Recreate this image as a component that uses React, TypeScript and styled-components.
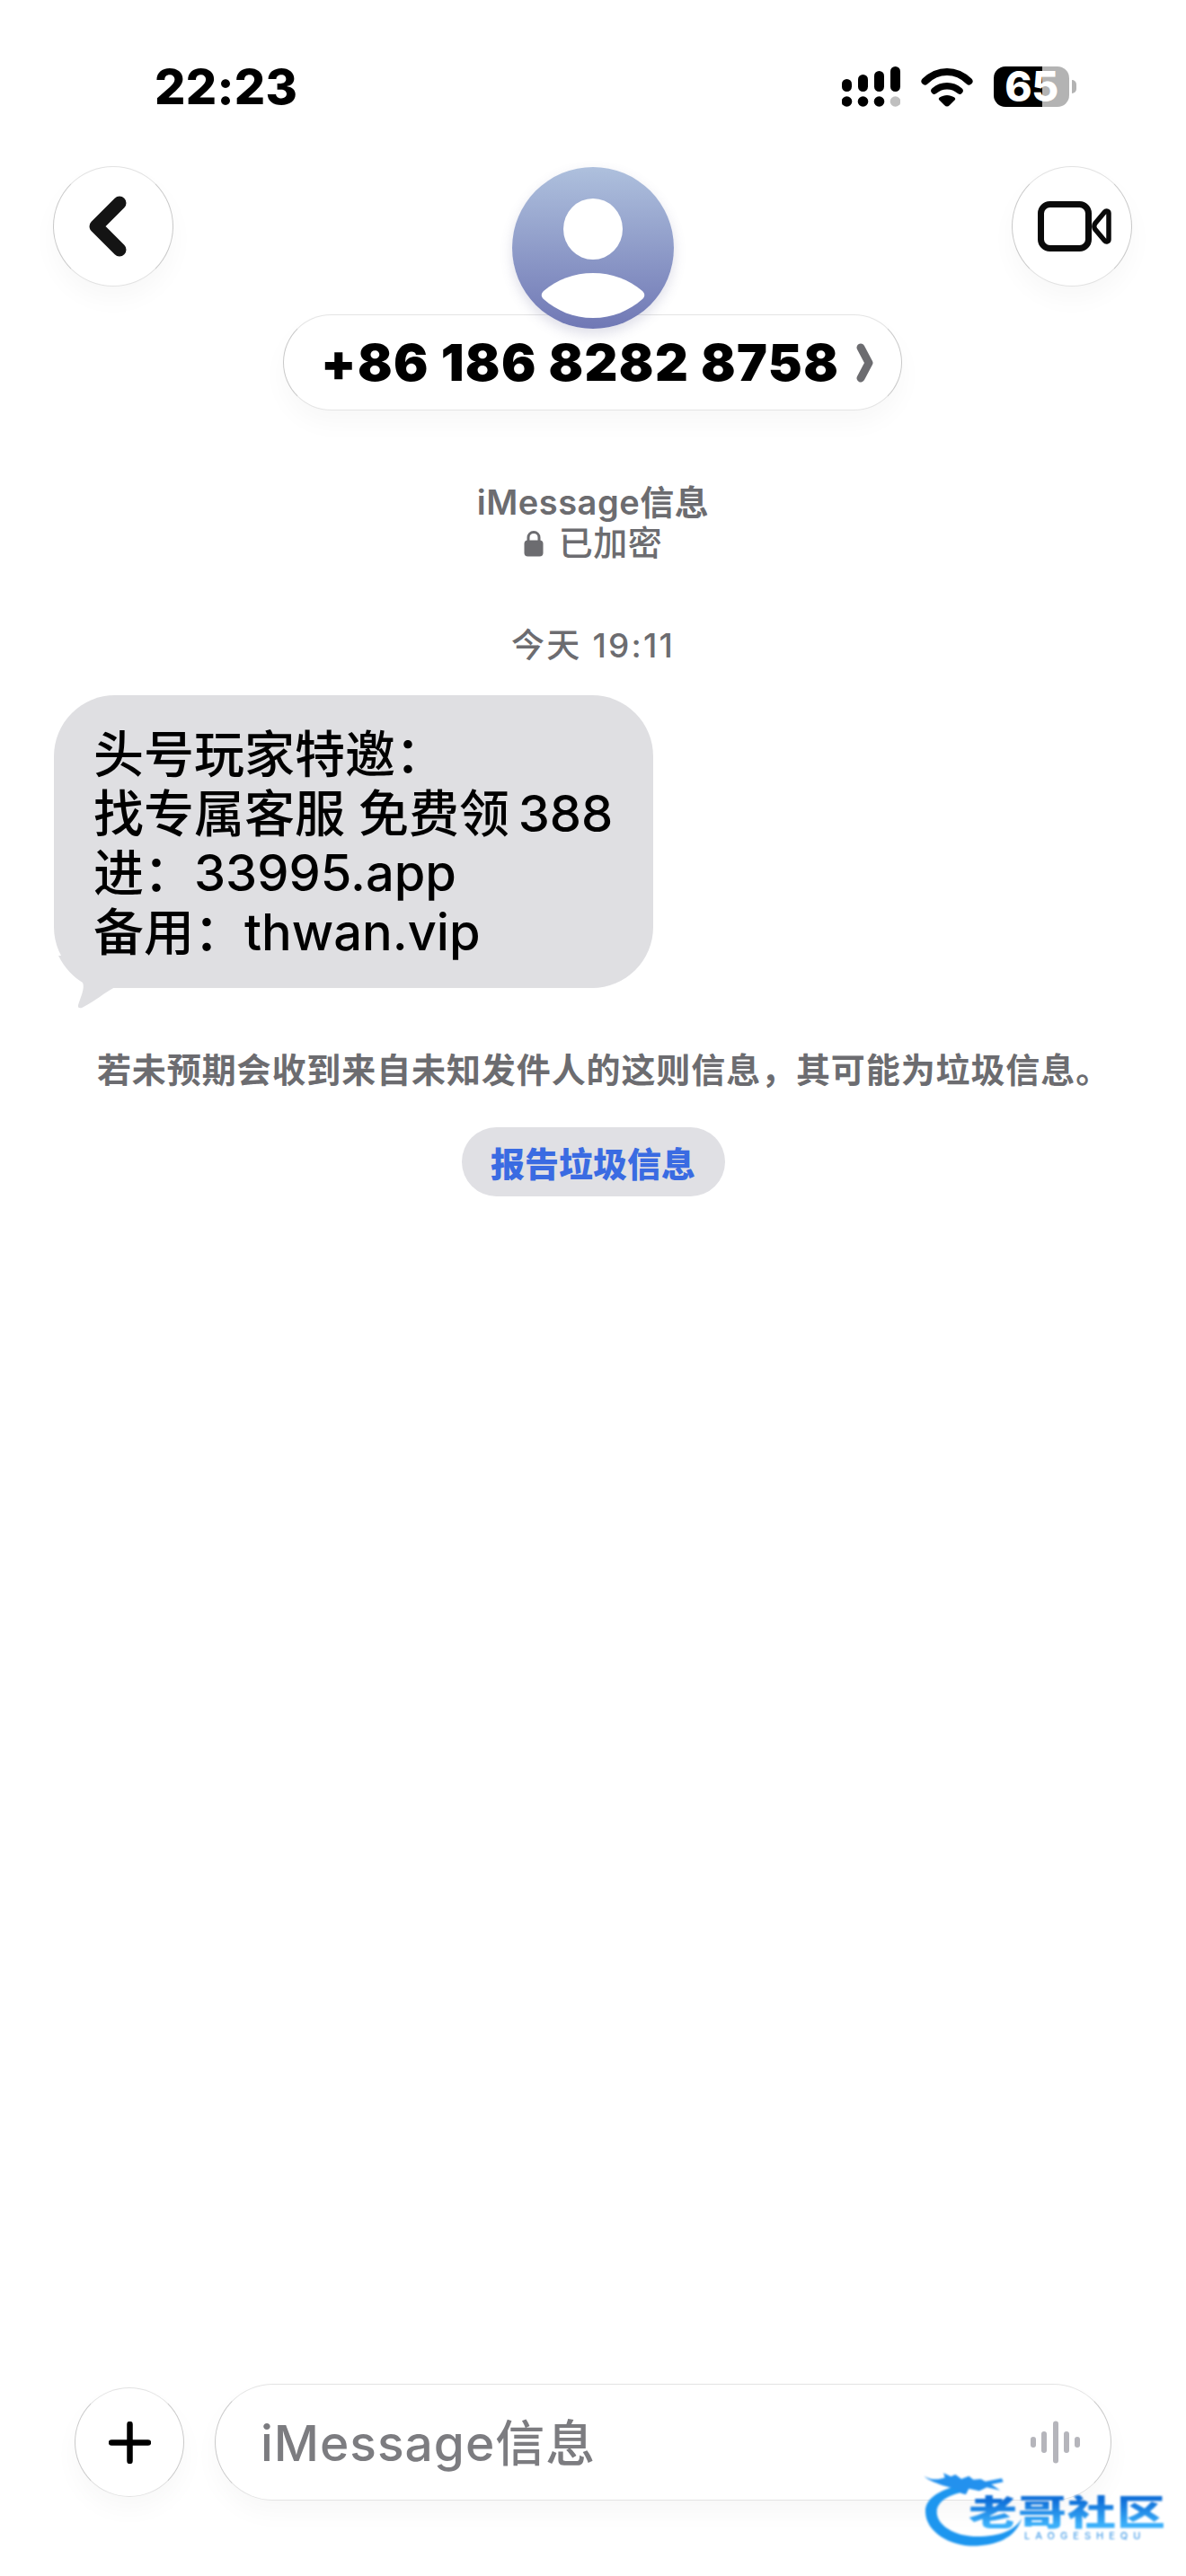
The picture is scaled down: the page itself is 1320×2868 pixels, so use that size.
import styled, { createGlobalStyle } from "styled-components";

const sans = `Inter, "Liberation Sans", "Noto Sans CJK SC", sans-serif`;
const cjk = `Inter, "Noto Sans CJK SC", sans-serif`;
const gray = "#6c6c70";
const softShadow = "0 14px 28px rgba(0, 0, 0, 0.03)";

const GlobalStyle = createGlobalStyle`
  html, body {
    margin: 0;
    padding: 0;
    background: #ffffff;
  }
`;

const Screen = styled.div`
  position: relative;
  display: flex;
  flex-direction: column;
  width: 1320px;
  height: 2868px;
  overflow: hidden;
  background: #ffffff;
  font-family: ${cjk};
  text-spacing-trim: space-all;
`;

const StatusBar = styled.div`
  display: flex;
  justify-content: space-between;
  align-items: center;
  height: 45px;
  margin-top: 74px;
  padding: 0 130px 0 172px;
`;

const Clock = styled.div`
  font-family: ${sans};
  font-size: 54px;
  font-weight: 800;
  letter-spacing: 0.3px;
  color: #000000;
`;

const StatusIcons = styled.div`
  display: flex;
  align-items: center;
  gap: 23px;
`;

const Battery = styled.div`
  position: relative;
  width: 84px;
  height: 45px;
  border-radius: 13px;
  background: linear-gradient(90deg, #000000 64%, #b3b3b3 64%);
  display: flex;
  align-items: center;
  justify-content: center;
  color: #ffffff;
  font-family: ${sans};
  font-size: 46px;
  font-weight: 800;
  line-height: 45px;
  letter-spacing: -0.5px;

  &::after {
    content: "";
    position: absolute;
    left: 87px;
    top: 15px;
    width: 5px;
    height: 15px;
    border-radius: 0 8px 8px 0;
    background: #b3b3b3;
  }
`;

const Header = styled.div`
  display: grid;
  grid-template-columns: 134px 1fr 134px;
  align-items: start;
  padding: 0 60px 0 59px;
  margin-top: 66px;
`;

const RoundButton = styled.div<{ $size: number }>`
  display: flex;
  align-items: center;
  justify-content: center;
  box-sizing: border-box;
  width: ${(p) => p.$size}px;
  height: ${(p) => p.$size}px;
  border-radius: 50%;
  border: 1.5px solid;
  border-color: #e2e2e2 #c9c9c9;
  background: #ffffff;
  box-shadow: ${softShadow};
`;

const BackGlyph = styled.svg`
  width: 42px;
  height: 68px;
  margin-right: 12px;
`;

const VideoGlyph = styled.svg`
  width: 82px;
  height: 56px;
  margin-left: 5px;
`;

const Contact = styled.div`
  display: flex;
  flex-direction: column;
  align-items: center;
  margin-top: 1px;
`;

const Avatar = styled.div`
  position: relative;
  z-index: 1;
  width: 180px;
  height: 180px;
  border-radius: 50%;
  overflow: hidden;
  background: linear-gradient(180deg, #aec0dd 0%, #7078b5 100%);
  box-shadow: 0 6px 14px rgba(90, 90, 140, 0.2);
`;

const NamePill = styled.div`
  display: flex;
  align-items: center;
  box-sizing: border-box;
  width: 689px;
  height: 107px;
  margin-top: -16px;
  padding-left: 41px;
  border: 1.5px solid;
  border-color: #e4e4e4 #c9c9c9;
  border-radius: 54px;
  background: #ffffff;
  box-shadow: ${softShadow};
`;

const Phone = styled.span`
  font-family: ${sans};
  font-size: 57px;
  font-weight: 900;
  letter-spacing: 1.4px;
  color: #000000;
  white-space: nowrap;
`;

const PillChevron = styled.svg`
  width: 20px;
  height: 44px;
  margin-left: 19px;
  flex: none;
`;

const Notice = styled.div`
  margin-top: 80px;
  text-align: center;
  color: ${gray};
  font-size: 38px;
  font-weight: 600;
  line-height: 45px;
  letter-spacing: 0.5px;
`;

const EncryptedRow = styled.div`
  display: flex;
  justify-content: center;
  align-items: center;
  gap: 17px;
  font-weight: 500;
`;

const Timestamp = styled.div`
  margin-top: 69px;
  text-align: center;
  color: ${gray};
  font-size: 37px;
  font-weight: 500;
  line-height: 46px;
  letter-spacing: 2.2px;
`;

const BubbleWrap = styled.div`
  position: relative;
  width: 667px;
  margin: 32px 0 0 60px;
`;

const Bubble = styled.div`
  box-sizing: border-box;
  height: 326px;
  padding: 33px 0 0 44px;
  border-radius: 68px;
  background: #dfdfe2;
  color: #000000;
  font-size: 56px;
  font-weight: 500;
  line-height: 66px;
  white-space: pre;
`;

const BubbleTail = styled.svg`
  position: absolute;
  left: 0;
  top: 280px;
  width: 80px;
  height: 72px;
`;

const SpamWarning = styled.div`
  margin-top: 68px;
  padding-left: 24px;
  text-align: center;
  color: ${gray};
  font-size: 38px;
  font-weight: 600;
  line-height: 46px;
  letter-spacing: 0.9px;
  white-space: nowrap;
`;

const ReportPill = styled.div`
  align-self: center;
  display: flex;
  align-items: center;
  justify-content: center;
  width: 293px;
  height: 77px;
  margin-top: 41px;
  border-radius: 39px;
  background: #e0e0e4;
  color: #3a6be2;
  font-size: 38px;
  font-weight: 800;
`;

const Composer = styled.div`
  display: flex;
  align-items: center;
  gap: 34px;
  margin-top: auto;
  margin-bottom: 84px;
  padding-left: 83px;
`;

const InputField = styled.div`
  display: flex;
  align-items: center;
  justify-content: space-between;
  box-sizing: border-box;
  width: 998px;
  height: 130px;
  padding: 0 33px 0 50px;
  border: 1.5px solid;
  border-color: #e4e4e4 #c9c9c9;
  border-radius: 65px;
  background: #ffffff;
  box-shadow: ${softShadow};
`;

const Placeholder = styled.span`
  margin-top: -6px;
  color: #7c7c80;
  font-size: 55px;
  font-weight: 500;
  letter-spacing: 1px;
`;

const Watermark = styled.div`
  position: absolute;
  left: 1026px;
  top: 2745px;
  width: 274px;
  height: 92px;
  filter: blur(0.8px);
`;

const DragonMark = styled.svg`
  position: absolute;
  left: -6px;
  top: -5px;
  width: 150px;
  height: 105px;
`;

const WatermarkName = styled.div`
  position: absolute;
  left: 52px;
  top: 33px;
  font-size: 54px;
  font-weight: 900;
  line-height: 54px;
  letter-spacing: 1px;
  white-space: nowrap;
  transform: scaleY(0.72);
  transform-origin: top left;
  background: linear-gradient(180deg, #0f6fd8 15%, #3bb0fa 85%);
  -webkit-background-clip: text;
  background-clip: text;
  color: transparent;
`;

const WatermarkLatin = styled.div`
  position: absolute;
  left: 114px;
  top: 74px;
  font-family: ${sans};
  font-size: 11px;
  line-height: 9px;
  font-weight: 500;
  letter-spacing: 6px;
  color: #4a9fe8;
  white-space: nowrap;
`;

const SignalIcon = () => (
  <svg width="65" height="45" viewBox="0 0 65 45">
    <rect x="0" y="14" width="11" height="14" rx="5.5" fill="#000" />
    <rect x="18" y="9" width="11" height="19" rx="5.5" fill="#000" />
    <rect x="36" y="5" width="11" height="23" rx="5.5" fill="#000" />
    <rect x="54" y="0" width="11" height="28" rx="5.5" fill="#000" />
    <circle cx="5.5" cy="39" r="5.8" fill="#000" />
    <circle cx="23.5" cy="39" r="5.8" fill="#000" />
    <circle cx="41.5" cy="39" r="5.8" fill="#000" />
    <circle cx="59.5" cy="39" r="5.8" fill="#bfbfbf" />
  </svg>
);

const WifiIcon = () => (
  <svg width="58" height="44" viewBox="0 0 58 44">
    <path d="M4.5 15.5C19 1.5 39 1.5 53.5 15.5" fill="none" stroke="#000" strokeWidth="8" strokeLinecap="round" />
    <path d="M15 26C23 19 35 19 43 26" fill="none" stroke="#000" strokeWidth="7.5" strokeLinecap="round" />
    <path d="M29 43.5C28 43.5 27 43 26 42L20.5 36.5C19.5 35.5 19.5 34.3 20.7 33.5C26 30 32 30 37.3 33.5C38.5 34.3 38.5 35.5 37.5 36.5L32 42C31 43 30 43.5 29 43.5Z" fill="#000" />
  </svg>
);

const BackIcon = () => (
  <BackGlyph viewBox="0 0 42 68">
    <path d="M34 8L8 34L34 60" fill="none" stroke="#141414" strokeWidth="15" strokeLinecap="round" strokeLinejoin="round" />
  </BackGlyph>
);

const VideoIcon = () => (
  <VideoGlyph viewBox="0 0 82 56">
    <rect x="3.5" y="3.5" width="53" height="49" rx="10" fill="none" stroke="#0a0a0a" strokeWidth="7" />
    <path d="M64 24.5L74.5 12C76 10.3 79 11 79 13.5V42.5C79 45 76 45.7 74.5 44L64 31.5C62.5 29.5 62.5 26.5 64 24.5Z" fill="none" stroke="#0a0a0a" strokeWidth="5.5" strokeLinejoin="round" />
  </VideoGlyph>
);

const PersonIcon = () => (
  <svg width="180" height="180" viewBox="0 0 180 180">
    <ellipse cx="90" cy="69" rx="33" ry="34" fill="#ffffff" />
    <path d="M35 138C50 125 69 118 90 118C111 118 130 125 145 138C148 141 148 144 145 147C130 160 112 168 90 168C68 168 50 160 35 147C32 144 32 141 35 138Z" fill="#ffffff" />
  </svg>
);

const LockIcon = () => (
  <svg width="22" height="30" viewBox="0 0 22 30">
    <path d="M5 13V8.500C5 5 7.500 2.500 11 2.500C14.500 2.500 17 5 17 8.500V13" fill="none" stroke={gray} strokeWidth="3" />
    <rect x="0.500" y="11.500" width="21" height="18" rx="4" fill={gray} />
  </svg>
);

const PlusIcon = () => (
  <svg width="47" height="47" viewBox="0 0 47 47">
    <path d="M23.500 3V44M3 23.500H44" fill="none" stroke="#000" strokeWidth="6.500" strokeLinecap="round" />
  </svg>
);

const WaveIcon = () => (
  <svg width="56" height="48" viewBox="0 0 56 48">
    {[
      [3, 12],
      [15, 24],
      [28, 47],
      [40, 24],
      [52, 12],
    ].map(([x, h]) => (
      <rect key={x} x={x - 3} y={24 - h / 2} width="6" height={h} rx="3" fill="#b5b5bb" />
    ))}
  </svg>
);

const App = () => {
  return (
    <Screen>
      <GlobalStyle />
      <StatusBar>
        <Clock>22:23</Clock>
        <StatusIcons>
          <SignalIcon />
          <WifiIcon />
          <Battery>65</Battery>
        </StatusIcons>
      </StatusBar>

      <Header>
        <RoundButton $size={134}>
          <BackIcon />
        </RoundButton>
        <Contact>
          <Avatar>
            <PersonIcon />
          </Avatar>
          <NamePill>
            <Phone>+86 186 8282 8758</Phone>
            <PillChevron viewBox="0 0 20 44">
              <path d="M5 5L14 22L5 39" fill="none" stroke={gray} strokeWidth="9" strokeLinecap="round" strokeLinejoin="round" />
            </PillChevron>
          </NamePill>
        </Contact>
        <RoundButton $size={134}>
          <VideoIcon />
        </RoundButton>
      </Header>

      <Notice>
        <div>iMessage信息</div>
        <EncryptedRow>
          <LockIcon />
          已加密
        </EncryptedRow>
      </Notice>

      <Timestamp>今天 19:11</Timestamp>

      <BubbleWrap>
        <Bubble>{"头号玩家特邀：\n找专属客服 免费领\u2009388\n进：33995.app\n备用：thwan.vip"}</Bubble>
        <BubbleTail viewBox="0 0 80 72">
          <path d="M5 10C12 24 22 34 32 40C35 46 29 58 27 65C26 69 30 69 33 67C45 61 58 50 68 45L68 10Z" fill="#dfdfe2" />
        </BubbleTail>
      </BubbleWrap>

      <SpamWarning>若未预期会收到来自未知发件人的这则信息，其可能为垃圾信息。</SpamWarning>
      <ReportPill>报告垃圾信息</ReportPill>

      <Composer>
        <RoundButton $size={122}>
          <PlusIcon />
        </RoundButton>
        <InputField>
          <Placeholder>iMessage信息</Placeholder>
          <WaveIcon />
        </InputField>
      </Composer>

      <Watermark>
        <DragonMark viewBox="0 0 450 315">
          <path d="M130 85C70 100 28 130 30 170C32 240 120 290 210 283C280 278 335 250 352 190C335 225 290 250 215 252C130 255 68 215 68 170C68 140 100 115 150 105Z" fill="#1d96ef" />
          <path d="M25 50C45 62 70 65 95 55L90 40L115 52L130 45L150 60L175 50L190 62L215 60L230 68L285 58L290 70L250 78L280 98L235 88L210 100L175 92L165 112L150 108L135 95L100 85C70 75 40 65 25 50Z" fill="#2391ee" />
        </DragonMark>
        <WatermarkName>老哥社区</WatermarkName>
        <WatermarkLatin>LAOGESHEQU</WatermarkLatin>
      </Watermark>
    </Screen>
  );
};

export default App;
